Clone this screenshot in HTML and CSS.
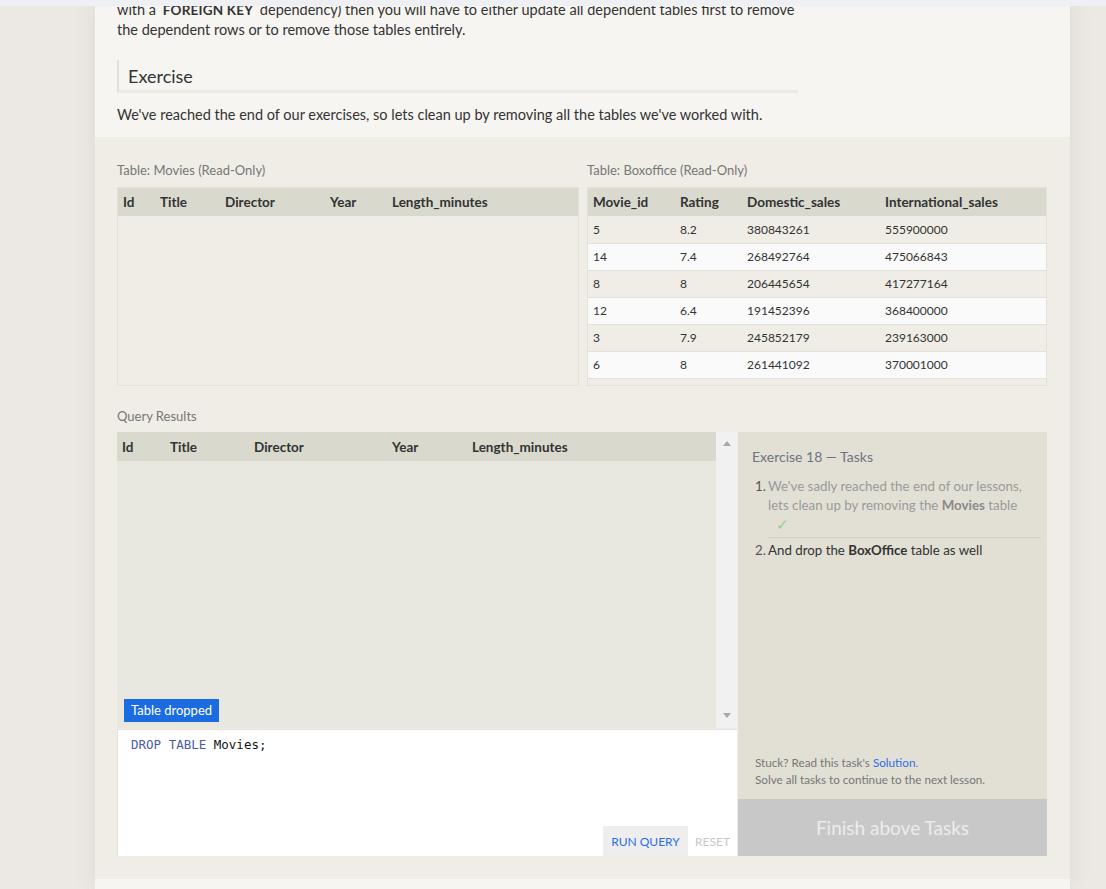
FILE: index.html
```html
<!DOCTYPE html>
<html>
<head>
<meta charset="utf-8">
<title>SQL Lesson 18</title>
<link rel="stylesheet" href="styles.css">
</head>
<body>
<div class="top-strip"></div>
<div class="page">
  <section class="lesson">
    <p class="text">with a <code class="kw">FOREIGN KEY</code> dependency) then you will have to either update all dependent tables first to remove<br>the dependent rows or to remove those tables entirely.</p>
    <h2 class="ex-heading">Exercise</h2>
    <p class="text">We've reached the end of our exercises, so lets clean up by removing all the tables we've worked with.</p>
  </section>

  <section class="exercise">
    <div class="tables">
      <div class="table-block">
        <div class="label">Table: Movies (Read-Only)</div>
        <div class="table-box">
          <table class="data">
            <thead>
              <tr><th class="w-37">Id</th><th class="w-65">Title</th><th class="w-105">Director</th><th class="w-62">Year</th><th>Length_minutes</th></tr>
            </thead>
          </table>
        </div>
      </div>
      <div class="table-block">
        <div class="label">Table: Boxoffice (Read-Only)</div>
        <div class="table-box">
          <table class="data">
            <thead>
              <tr><th class="w-87">Movie_id</th><th class="w-67">Rating</th><th class="w-138">Domestic_sales</th><th>International_sales</th></tr>
            </thead>
            <tbody>
              <tr><td>5</td><td>8.2</td><td>380843261</td><td>555900000</td></tr>
              <tr><td>14</td><td>7.4</td><td>268492764</td><td>475066843</td></tr>
              <tr><td>8</td><td>8</td><td>206445654</td><td>417277164</td></tr>
              <tr><td>12</td><td>6.4</td><td>191452396</td><td>368400000</td></tr>
              <tr><td>3</td><td>7.9</td><td>245852179</td><td>239163000</td></tr>
              <tr><td>6</td><td>8</td><td>261441092</td><td>370001000</td></tr>
            </tbody>
          </table>
        </div>
      </div>
    </div>

    <div class="label query-label">Query Results</div>
    <div class="query-row">
      <div class="query-main">
        <div class="results">
          <div class="results-table">
            <table class="data results-data">
              <thead>
                <tr><th class="w-48">Id</th><th class="w-84">Title</th><th class="w-138">Director</th><th class="w-80">Year</th><th>Length_minutes</th></tr>
              </thead>
            </table>
            <span class="badge">Table dropped</span>
          </div>
          <div class="scrollbar"><span class="arrow up"></span><span class="arrow down"></span></div>
        </div>
        <div class="editor">
          <pre class="code"><span class="sql-kw">DROP TABLE</span> Movies;</pre>
          <div class="editor-actions">
            <button class="btn run">RUN QUERY</button>
            <button class="btn reset">RESET</button>
          </div>
        </div>
      </div>

      <aside class="tasks">
        <div class="tasks-body">
          <h3 class="tasks-title">Exercise 18 — Tasks</h3>
          <ol class="task-list">
            <li class="task done">
              <span class="num">1.</span>
              <div class="task-text">
                <div>We've sadly reached the end of our lessons,</div>
                <div>lets clean up by removing the <b>Movies</b> table</div>
                <div class="check">✓</div>
              </div>
            </li>
            <li class="task">
              <span class="num">2.</span>
              <div class="task-text">And drop the <b>BoxOffice</b> table as well</div>
            </li>
          </ol>
          <div class="hint">
            <div>Stuck? Read this task's <a class="solution" href="#">Solution</a>.</div>
            <div>Solve all tasks to continue to the next lesson.</div>
          </div>
        </div>
        <div class="finish">Finish above Tasks</div>
      </aside>
    </div>
  </section>
</div>
</body>
</html>
```

FILE: styles.css
```css
* { box-sizing: border-box; }
html, body { margin: 0; padding: 0; }
body {
  background: #ece8e4;
  font-family: Lato, "Noto Sans", sans-serif;
  color: #333;
  overflow: hidden;
}
.top-strip {
  position: fixed;
  top: 0; left: 0; right: 0;
  height: 6px;
  background: #eef0f3;
  z-index: 5;
}
.page {
  width: 975px;
  margin-left: 95px;
  min-height: 889px;
  background: #f6f5f1;
  box-shadow: 0 0 26px rgba(0, 0, 0, 0.07);
}

/* lesson text */
.lesson { padding: 0 22px 12px; }
.text {
  margin: 0;
  font-size: 14.5px;
  line-height: 20px;
  color: #333;
  white-space: nowrap;
}
.kw { font-family: inherit; font-weight: 700; font-size: 13.5px; letter-spacing: 0.2px; padding: 0 3px; }
.ex-heading {
  margin: 20px 0 12px;
  width: 681px;
  height: 33px;
  border-left: 2px solid #e3e1d5;
  border-bottom: 3px solid #ebe9e0;
  padding: 2px 0 0 9px;
  font-size: 18px;
  font-weight: 400;
  line-height: 28px;
  color: #333;
}

/* exercise area */
.exercise {
  background: #efede6;
  padding: 25px 22px 23px;
}
.tables {
  display: grid;
  grid-template-columns: 462px 460px;
  column-gap: 8px;
}
.label {
  font-size: 13px;
  line-height: 17px;
  color: #777;
  margin-bottom: 8px;
}
.query-label { margin-top: 22px; margin-bottom: 7px; }
.table-box {
  height: 199px;
  border: 1px solid #e3e1d9;
}
table.data {
  border-collapse: collapse;
  width: 100%;
}
.data th {
  background: #d9d9ce;
  height: 28px;
  text-align: left;
  font-size: 13.5px;
  font-weight: 700;
  padding: 0 5px;
  color: #333;
}
.data td {
  height: 27px;
  font-size: 12px;
  padding: 0 5px;
  border-bottom: 1px solid #e2e0d8;
  color: #333;
}
.data tbody tr:nth-child(even) td { background: #fafafa; }
.w-37 { width: 37px; }
.w-48 { width: 48px; }
.w-62 { width: 62px; }
.w-65 { width: 65px; }
.w-67 { width: 67px; }
.w-80 { width: 80px; }
.w-84 { width: 84px; }
.w-87 { width: 87px; }
.w-105 { width: 105px; }
.w-138 { width: 138px; }

/* query row */
.query-row {
  display: grid;
  grid-template-columns: 620px 309px;
  column-gap: 1px;
}
.results {
  display: flex;
  height: 296px;
  background: #e9e8e0;
}
.results-table {
  flex: 1;
  display: flex;
  flex-direction: column;
}
.results-data th { height: 29px; }
.badge {
  align-self: flex-start;
  margin: auto 0 6px 7px;
  background: #1b6ce0;
  color: #fff;
  font-size: 13px;
  line-height: 23px;
  padding: 0 7px;
}
.scrollbar {
  width: 21px;
  background: #f1f1f1;
  display: flex;
  flex-direction: column;
  justify-content: space-between;
  align-items: center;
  padding: 9px 0 10px;
}
.arrow {
  width: 0; height: 0;
  border-left: 4.5px solid transparent;
  border-right: 4.5px solid transparent;
}
.arrow.up { border-bottom: 5px solid #a8a8a8; }
.arrow.down { border-top: 5px solid #a8a8a8; }

.editor {
  height: 127px;
  margin-top: 1px;
  background: #fff;
  border: 1px solid #e4e2da;
  border-right: 0;
  border-bottom: 0;
  display: flex;
  flex-direction: column;
}
.code {
  margin: 0;
  padding: 7px 13px;
  font: 12.5px/16px "DejaVu Sans Mono", monospace;
  color: #111;
}
.sql-kw { color: #4b5ca6; }
.editor-actions {
  margin-top: auto;
  display: flex;
  justify-content: flex-end;
}
.btn {
  height: 30px;
  border: 0;
  font-family: Lato, "Noto Sans", sans-serif;
  font-size: 12px;
  padding: 0;
}
.run { width: 85px; background: #eee; color: #2c6ee6; }
.reset { width: 49px; background: transparent; color: #c8c8c8; }

/* tasks panel */
.tasks {
  display: flex;
  flex-direction: column;
  background: #e2e0d5;
  height: 424px;
}
.tasks-body {
  flex: 1;
  display: flex;
  flex-direction: column;
  padding: 15px 6px 11px 14px;
}
.tasks-title {
  margin: 0 0 10px;
  font-size: 14px;
  font-weight: 400;
  line-height: 20px;
  color: #6e7480;
}
.task-list {
  list-style: none;
  margin: 0;
  padding: 0 0 0 3px;
}
.task {
  display: flex;
  font-size: 13.3px;
  line-height: 19px;
}
.num { width: 13px; flex: none; color: #555; padding-top: 3px; }
.task:first-child .num { padding-top: 0; }
.task-text { flex: 1; padding: 3px 0; }
.task:first-child .task-text { padding-top: 0; border-bottom: 1px solid #d4d2c7; }
.task.done .task-text { color: #9a9a9a; }
.task.done b { color: #8a8a8a; }
.task b { color: #333; }
.check { padding-left: 8px; font-size: 15px; color: #8fcf8f; }
.hint {
  margin-top: auto;
  padding-left: 3px;
  font-size: 11.7px;
  line-height: 17px;
  color: #777;
}
.solution { color: #2f6fe6; text-decoration: none; }
.finish {
  height: 57px;
  background: #c8c8c8;
  color: #ececec;
  font-size: 19px;
  font-weight: 400;
  display: flex;
  align-items: center;
  justify-content: center;
}
```
